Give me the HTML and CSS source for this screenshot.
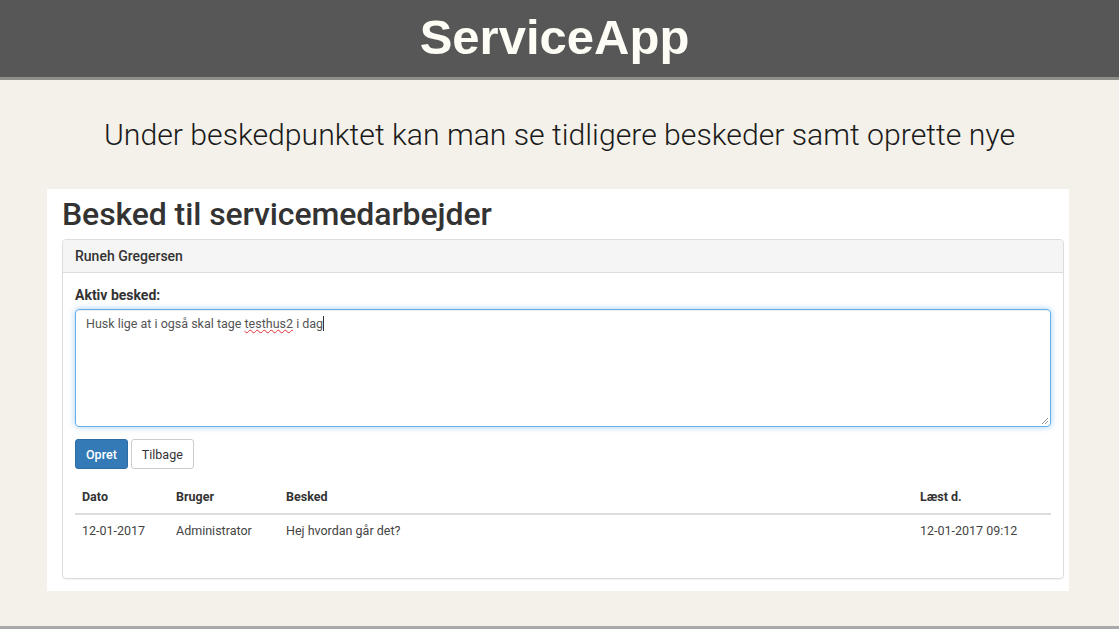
FILE: index.html
```html
<!DOCTYPE html>
<html lang="da">
<head>
    <meta charset="UTF-8">
    <title>ServiceApp</title>
    <link rel="stylesheet" href="styles.css">
</head>
<body>
    <header class="topbar">
        <h1>ServiceApp</h1>
    </header>

    <p class="lead">Under beskedpunktet kan man se tidligere beskeder samt oprette nye</p>

    <div class="shot">
        <h2>Besked til servicemedarbejder</h2>
        <div class="panel">
            <div class="panel-heading">Runeh Gregersen</div>
            <div class="panel-body">
                <label class="label">Aktiv besked:</label>
                <div class="textarea">Husk lige at i også skal tage <span class="typo">testhus2</span> i dag<span class="caret"></span></div>
                <div class="buttons">
                    <button class="btn btn-primary">Opret</button>
                    <button class="btn btn-default">Tilbage</button>
                </div>
                <table class="table">
                    <thead>
                        <tr>
                            <th class="c-date">Dato</th>
                            <th class="c-user">Bruger</th>
                            <th class="c-msg">Besked</th>
                            <th class="c-read">Læst d.</th>
                        </tr>
                    </thead>
                    <tbody>
                        <tr>
                            <td>12-01-2017</td>
                            <td>Administrator</td>
                            <td>Hej hvordan går det?</td>
                            <td>12-01-2017 09:12</td>
                        </tr>
                    </tbody>
                </table>
            </div>
        </div>
    </div>

    <div class="bottomline"></div>
</body>
</html>
```

FILE: styles.css
```css
html, body {
    margin: 0;
    padding: 0;
    height: 629px;
    overflow: hidden;
}
body {
    background: #f4f1ea;
    font-family: "Liberation Sans", Arial, sans-serif;
    color: #222;
    position: relative;
}
.topbar {
    background: #575757;
    height: 77px;
    border-bottom: 3px solid #8e8e8a;
    display: flex;
    align-items: center;
    justify-content: center;
}
.topbar h1 {
    margin: 0;
    color: #fdfdf5;
    font-size: 49px;
    font-weight: bold;
    letter-spacing: 0;
    line-height: 1;
    padding-bottom: 2px;
    padding-right: 10px;
}
.lead {
    margin: 39px 0 0;
    text-align: center;
    font-family: Roboto, "Liberation Sans", sans-serif;
    font-size: 30.2px;
    font-weight: 300;
    color: #1a1a1a;
    line-height: 32px;
}
.shot {
    background: #fff;
    margin: 38px 50px 0 47px;
    height: 402px;
    padding: 0 0 0 15px;
    box-sizing: border-box;
    font-family: Roboto, "Liberation Sans", sans-serif;
    font-size: 12.5px;
    color: #333;
    overflow: hidden;
}
.shot h2 {
    margin: 0;
    padding-top: 6px;
    font-size: 32px;
    font-weight: 500;
    line-height: 38px;
    color: #333;
    letter-spacing: -0.1px;
}
.panel {
    margin-top: 6px;
    width: 1002px;
    height: 340px;
    box-sizing: border-box;
    border: 1px solid #ddd;
    border-radius: 4px;
    box-shadow: 0 1px 1px rgba(0, 0, 0, 0.05);
}
.panel-heading {
    background: #f5f5f5;
    border-bottom: 1px solid #ddd;
    height: 32px;
    line-height: 32px;
    padding: 0 12px;
    font-size: 14px;
    font-weight: 500;
    border-radius: 3px 3px 0 0;
}
.panel-body {
    padding: 13px 12px 0;
}
.label {
    display: block;
    font-size: 14px;
    font-weight: bold;
    line-height: 18px;
    margin-bottom: 5px;
}
.textarea {
    height: 118px;
    box-sizing: border-box;
    border: 1px solid #66afe9;
    border-radius: 4px;
    box-shadow: inset 0 1px 1px rgba(0, 0, 0, 0.075), 0 0 6px rgba(102, 175, 233, 0.6);
    padding: 5px 10px;
    line-height: 18px;
    color: #555;
    position: relative;
}
.textarea::after {
    content: "";
    position: absolute;
    right: 2px;
    bottom: 2px;
    width: 6px;
    height: 6px;
    background: linear-gradient(135deg, transparent 45%, #999 45%, #999 55%, transparent 55%, transparent 70%, #999 70%, #999 80%, transparent 80%);
}
.typo {
    text-decoration: underline wavy #e03030;
    text-decoration-thickness: 1px;
}
.caret {
    display: inline-block;
    width: 1px;
    height: 15px;
    background: #333;
    vertical-align: -3px;
}
.buttons {
    display: flex;
    gap: 3px;
    margin-top: 12px;
}
.btn {
    font-family: Roboto, "Liberation Sans", sans-serif;
    font-size: 12.5px;
    height: 30px;
    padding: 0 10px;
    border-radius: 3px;
    border: 1px solid #ccc;
    background: #fff;
    color: #333;
}
.btn-primary {
    background: #337ab7;
    border-color: #2e6da4;
    color: #fff;
    font-weight: 500;
}
.table {
    width: 100%;
    border-collapse: collapse;
    margin-top: 13px;
}
.table th {
    text-align: left;
    font-weight: bold;
    padding: 8px 7px 10px;
    line-height: 13px;
    border-bottom: 2px solid #ddd;
}
.table td {
    padding: 8px 7px;
    line-height: 16px;
    color: #444;
}
.c-date { width: 80px; }
.c-user { width: 96px; }
.c-read { width: 124px; }
.bottomline {
    position: absolute;
    left: 0;
    right: 0;
    bottom: 0;
    height: 3px;
    background: #a9a9a9;
}
```
